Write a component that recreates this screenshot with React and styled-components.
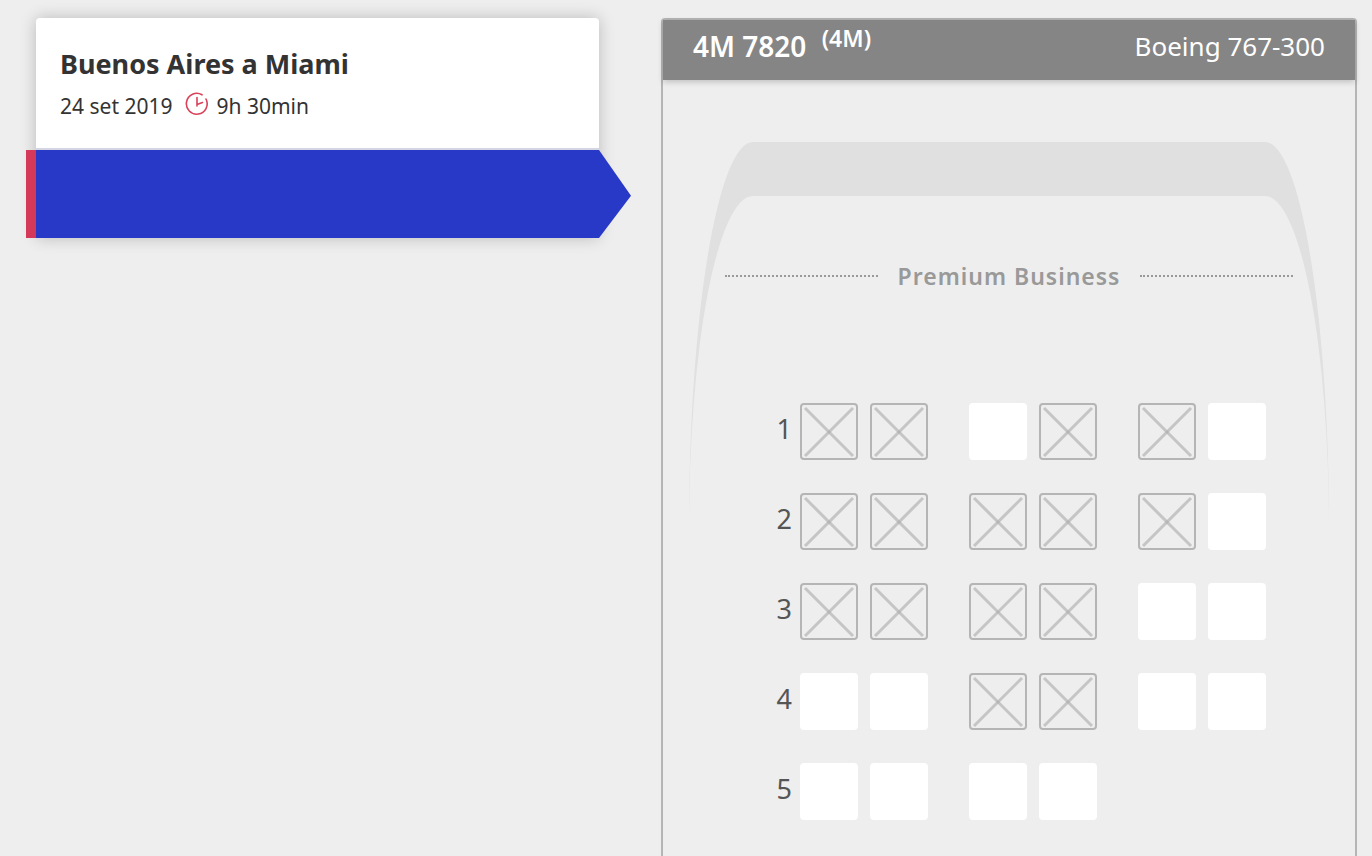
import React, { useState } from "react";
import styled, { createGlobalStyle } from "styled-components";

const GlobalStyle = createGlobalStyle`
  * {
    box-sizing: border-box;
  }

  body {
    margin: 0;
    background: #eeeeee;
    color: #333333;
    font-family: "Noto Sans", "Open Sans", sans-serif;
  }
`;

const Page = styled.div`
  display: grid;
  grid-template-columns: 563fr 696fr;
  column-gap: 62px;
  min-height: 100vh;
  padding: 18px 15px 0 36px;
`;

const FlightCard = styled.section`
  align-self: start;
  border-radius: 4px;
  background: #ffffff;
  box-shadow: 0 0 16px rgba(0, 0, 0, 0.22);
`;

const FlightInfo = styled.header`
  height: 132px;
  padding: 26px 24px 0;
  border-bottom: 2px solid #d3d6e2;
`;

const Route = styled.h1`
  margin: 0;
  font-size: 27px;
  line-height: 40px;
  font-weight: 700;
`;

const Details = styled.p`
  display: flex;
  align-items: center;
  margin: 6px 0 0;
  font-size: 21px;
  line-height: 32px;
`;

const ClockIcon = styled.svg`
  width: 24px;
  height: 24px;
  margin: 0 7px 4px 13px;
  fill: none;
  stroke: #d9415a;
  stroke-width: 1.6;
  stroke-linecap: round;
`;

const Passenger = styled.div`
  height: 88px;
  margin: 0 -32px 0 -10px;
  border-left: 10px solid #d5395a;
  background: #2839c7;
  clip-path: polygon(
    0 0,
    calc(100% - 32px) 0,
    100% 52%,
    calc(100% - 32px) 100%,
    0 100%
  );
`;

const Panel = styled.main`
  display: flex;
  flex-direction: column;
  border: 2px solid #b5b5b5;
  border-bottom: 0;
  border-radius: 4px 4px 0 0;
`;

const PanelHeader = styled.header`
  display: flex;
  justify-content: space-between;
  height: 60px;
  padding: 6px 30px 0;
  background: #858585;
  box-shadow: 0 2px 6px rgba(0, 0, 0, 0.2);
  color: #ffffff;
  font-size: 26px;
  line-height: 40px;
`;

const FlightNumber = styled.h2`
  margin: 0;
  font-size: 28px;
  font-weight: 600;

  sup {
    margin-left: 8px;
    font-size: 23px;
    line-height: 0;
  }
`;

const Fuselage = styled.div`
  flex: 1;
  margin: 62px 26px 0;
  border-top: 54px solid #e0e0e0;
  border-radius: 64px 64px 0 0 / 388px 388px 0 0;
`;

const Cabin = styled.h3`
  display: flex;
  align-items: center;
  gap: 20px;
  margin: 60px 36px 107px;
  color: #999999;
  font-size: 23px;
  line-height: 40px;
  font-weight: 600;
  letter-spacing: 1px;

  &::before,
  &::after {
    content: "";
    flex: 1;
    border-top: 2px dotted #999999;
  }
`;

const SeatMap = styled.div`
  display: flex;
  flex-direction: column;
  gap: 33px;
  width: fit-content;
  margin: 0 auto;
`;

const Row = styled.div`
  display: flex;
  gap: 41px;
`;

const Group = styled.div`
  display: flex;
  gap: 12px;
`;

const RowNumber = styled.span`
  width: 48px;
  margin-right: -41px;
  padding-right: 8px;
  color: #555555;
  font-size: 27px;
  line-height: 52px;
  text-align: right;
`;

const Seat = styled.button`
  width: 58px;
  height: 57px;
  padding: 0;
  border: 2px solid ${(props) => (props.$selected ? "#2839c7" : "#ffffff")};
  border-radius: 4px;
  background: #ffffff;
  cursor: pointer;

  &:disabled {
    border-color: #b5b5b5;
    background: transparent;
    cursor: default;
  }

  svg {
    display: block;
    width: 100%;
    height: 100%;
    stroke: #aaaaaa;
    stroke-opacity: 0.6;
    stroke-width: 3;
  }
`;

// x = taken, o = free
const rows = [
  ["xx", "ox", "xo"],
  ["xx", "xx", "xo"],
  ["xx", "xx", "oo"],
  ["oo", "xx", "oo"],
  ["oo", "oo"],
];

const letters = ["AC", "DG", "JL"];

function Cross() {
  return (
    <svg viewBox="0 0 54 53" aria-hidden="true">
      <path d="M3 3L51 51" />
      <path d="M51 3L3 51" />
    </svg>
  );
}

function App() {
  const [selected, setSelected] = useState(null);

  return (
    <>
      <GlobalStyle />
      <Page>
        <FlightCard>
          <FlightInfo>
            <Route>Buenos Aires a Miami</Route>
            <Details>
              24 set 2019
              <ClockIcon viewBox="0 0 24 24" aria-hidden="true">
                <path d="M17 2.8A10.4 10.4 0 1 0 21 7" />
                <path d="M12 5.5V14M12 12.5L17.5 10.5" />
              </ClockIcon>
              9h 30min
            </Details>
          </FlightInfo>
          <Passenger />
        </FlightCard>

        <Panel>
          <PanelHeader>
            <FlightNumber>
              4M 7820 <sup>(4M)</sup>
            </FlightNumber>
            <span>Boeing 767-300</span>
          </PanelHeader>
          <Fuselage>
            <Cabin>Premium Business</Cabin>
            <SeatMap>
              {rows.map((groups, i) => (
                <Row key={i}>
                  <RowNumber>{i + 1}</RowNumber>
                  {groups.map((group, g) => (
                    <Group key={g}>
                      {group.split("").map((state, s) => {
                        const id = `${i + 1}${letters[g][s]}`;
                        return (
                          <Seat
                            key={id}
                            type="button"
                            aria-label={id}
                            disabled={state === "x"}
                            $selected={selected === id}
                            onClick={() => setSelected(id)}
                          >
                            {state === "x" && <Cross />}
                          </Seat>
                        );
                      })}
                    </Group>
                  ))}
                </Row>
              ))}
            </SeatMap>
          </Fuselage>
        </Panel>
      </Page>
    </>
  );
}

export default App;
